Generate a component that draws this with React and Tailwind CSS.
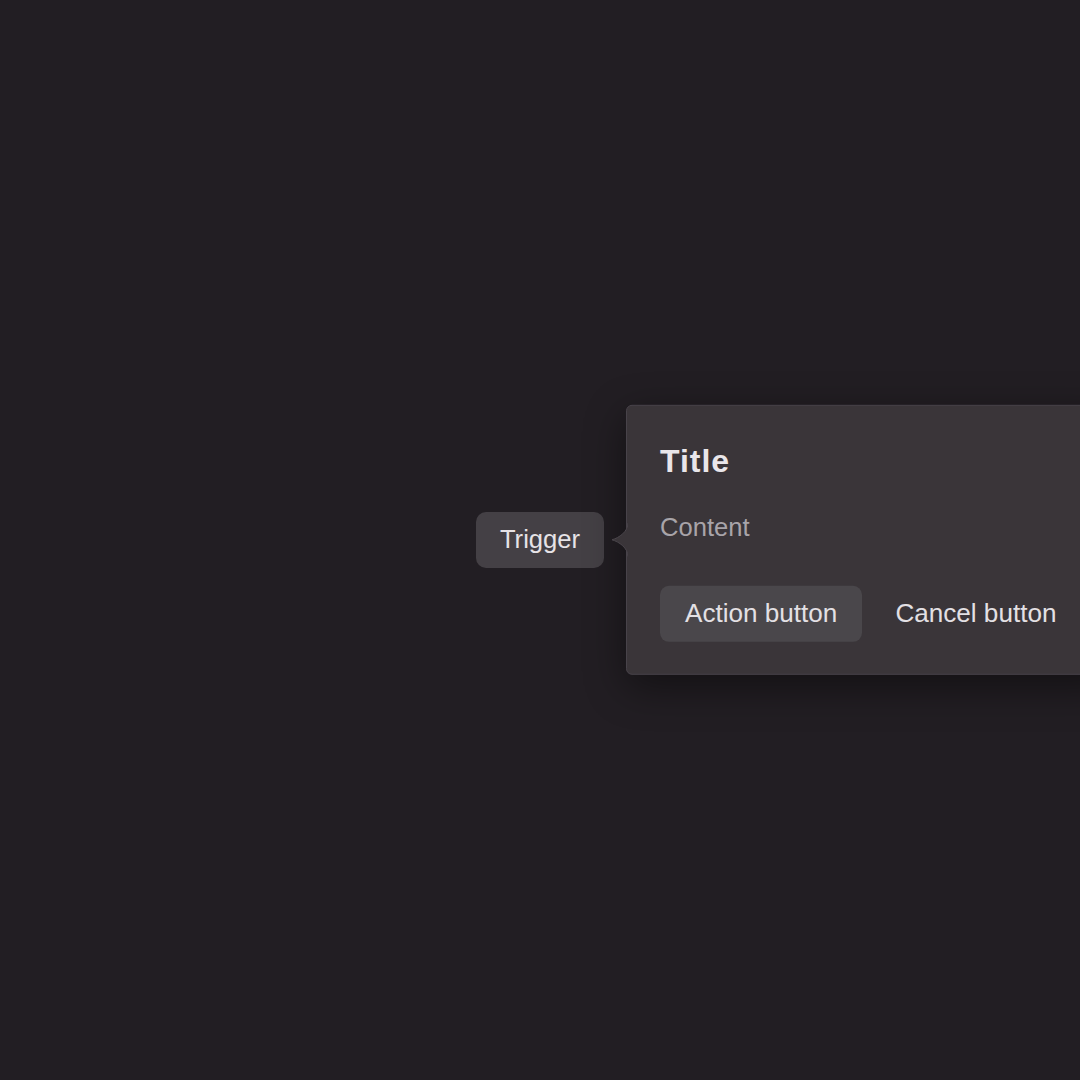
import React from "react";

const Arrow = () => (
    <svg
        width="17"
        height="34"
        viewBox="0 0 17 34"
        className="absolute left-[-16px] top-1/2 -translate-y-1/2"
    >
        <path d="M17 0 C17 9 8 15 1 17 C8 19 17 25 17 34 Z" fill="#3a3539" />
        <path d="M17 0 C17 9 8 15 1 17 C8 19 17 25 17 34" fill="none" stroke="#4a454b" strokeWidth="1" />
    </svg>
);

const App = () => {
    return (
        <div
            className="h-screen w-full overflow-hidden bg-[#221e23] flex items-center justify-center"
            style={{ fontFamily: '"Liberation Sans", Arial, sans-serif' }}
        >
            <div className="relative">
                <button className="h-[56px] px-[24px] pb-[2px] rounded-[10px] bg-[#444045] text-[#e6e3e7] text-[25.6px] leading-[1.5]">
                    Trigger
                </button>

                <div className="absolute left-full top-1/2 -translate-y-1/2 ml-[22px] w-max rounded-[6px] border border-[#48434a] bg-[#3a3539] pl-[33px] pr-[32px] pt-[31px] pb-[32px] shadow-[0_12px_40px_rgba(0,0,0,0.45)]">
                    <Arrow />
                    <h2 className="text-[32px] leading-[1.5] font-bold tracking-[0.03em] text-[#e9e6ea]">Title</h2>
                    <p className="mt-[23px] text-[25.6px] leading-[1.5] text-[#a8a4a9]">Content</p>
                    <div className="mt-[40px] flex items-center gap-[8px]">
                        <button className="h-[56px] px-[25px] pb-[2px] rounded-[9px] bg-[#4a474b] text-[#e3e0e4] text-[26.1px] leading-[1.5]">
                            Action button
                        </button>
                        <button className="h-[56px] px-[25px] pb-[2px] rounded-[9px] text-[#e3e0e4] text-[26.1px] leading-[1.5]">
                            Cancel button
                        </button>
                    </div>
                </div>
            </div>
        </div>
    );
};

export default App;
